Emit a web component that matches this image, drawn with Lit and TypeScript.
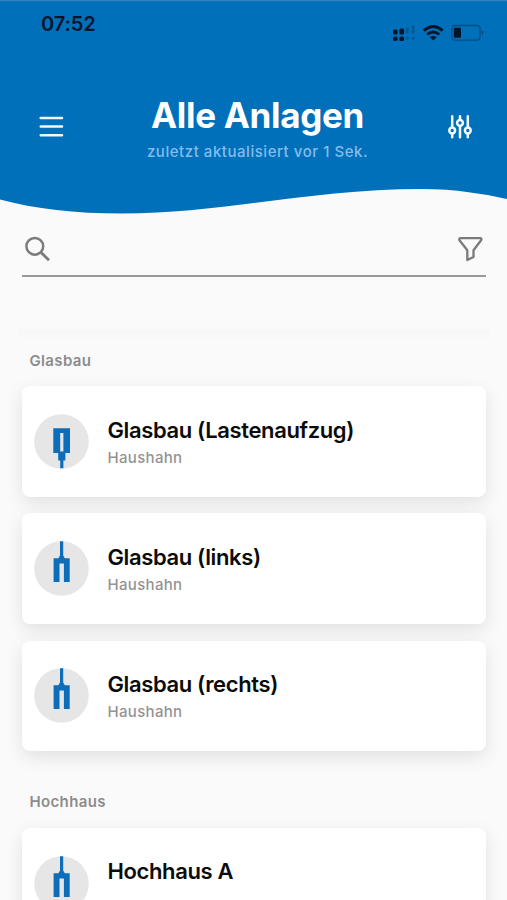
import { LitElement, html, svg, css } from "lit";
import { customElement, property } from "lit/decorators.js";

@customElement("status-bar")
class StatusBar extends LitElement {
  static styles = css`
    :host { display: flex; justify-content: space-between; height: 48px; padding: 0 22px 0 41px; color: #04152c; }
    .time { font-size: 20px; line-height: 24px; font-weight: 600; margin-top: 12px; letter-spacing: -0.1px; }
    .icons { width: 94px; height: 24px; margin-top: 20px; }
  `;
  render() {
    return html`
      <div class="time">07:52</div>
      <svg class="icons" viewBox="391 20 94 24">
        <g fill="#03152b">
          <rect x="393" y="29.5" width="4.6" height="5" rx="1.5" />
          <rect x="399.3" y="28.5" width="4.8" height="6" rx="1.5" />
          <rect x="393" y="36.5" width="4.6" height="4.6" rx="1.6" />
          <rect x="399.3" y="36.5" width="4.8" height="4.6" rx="1.6" />
        </g>
        <g fill="#03152b" opacity=".22">
          <rect x="405.8" y="27" width="3" height="6.5" rx="1" />
          <rect x="411.6" y="25" width="3" height="8.5" rx="1" />
          <rect x="406" y="36.8" width="3" height="3" rx="1.2" />
          <rect x="411.6" y="36.8" width="3" height="3" rx="1.2" />
        </g>
        <g fill="none" stroke="#03152b" stroke-width="2.9">
          <path d="M423.8 30.6 Q433.2 22.4 442.6 30.6" />
          <path d="M427.2 34.5 Q433.2 29.4 439.2 34.5" />
        </g>
        <path d="M429.8 37.2 Q433.2 34.6 436.6 37.2 L433.2 40.4 Z" fill="#03152b" />
        <rect x="451.7" y="25.5" width="28.3" height="14.6" rx="3.2" fill="none" stroke="#03152b" stroke-opacity=".38" stroke-width="1.3" />
        <rect x="453.8" y="27.8" width="7.2" height="10" rx="1.4" fill="#03152b" />
        <path d="M481.8 30.3 Q485 32.6 481.8 35 Z" fill="#03152b" fill-opacity=".45" />
      </svg>
    `;
  }
}

@customElement("page-header")
class PageHeader extends LitElement {
  static styles = css`
    :host { display: grid; grid-template-columns: 24px 1fr 26px; padding: 50px 34px 0 39px; color: #fff; }
    .icon { display: block; width: 26px; height: 26px; margin-top: 16px; overflow: visible; }
    .titles { text-align: center; white-space: nowrap; padding-left: 5px; }
    .title { font-size: 35px; line-height: 42px; font-weight: 700; margin: -4px 0 0; letter-spacing: -0.3px; }
    .sub { font-size: 15px; line-height: 20px; font-weight: 500; color: #83bdec; margin-top: 6px; letter-spacing: 0.54px; }
  `;
  render() {
    return html`
      <svg class="icon" viewBox="0 0 26 26" stroke="#eefaff" stroke-width="2.5" stroke-linecap="round">
        <path d="M1.7 3.9H23 M1.7 12.5H23 M1.7 21.3H23" />
      </svg>
      <div class="titles">
        <h1 class="title">Alle Anlagen</h1>
        <div class="sub">zuletzt aktualisiert vor 1 Sek.</div>
      </div>
      <svg class="icon" viewBox="0 0 26 26" fill="none" stroke="#f2fbff" stroke-width="2.5" stroke-linecap="round">
        <path d="M5.2 2.2V13 M5.2 20V23.3 M13 2.2V5.4 M13 12.4V23.3 M20.8 2.2V13 M20.8 20V23.3" />
        <circle cx="5.2" cy="16.5" r="2.9" />
        <circle cx="13" cy="8.9" r="2.9" />
        <circle cx="20.8" cy="16.5" r="2.9" />
      </svg>
    `;
  }
}

@customElement("search-field")
class SearchField extends LitElement {
  static styles = css`
    :host { display: flex; justify-content: space-between; height: 40px; margin: 0 21px 0 22px; border-bottom: 2px solid #999; }
    .icon { width: 28px; height: 28px; fill: none; stroke: #7b7b7b; }
  `;
  render() {
    return html`
      <svg class="icon" viewBox="22 235 28 28" stroke-width="2.5">
        <circle cx="34.8" cy="246.3" r="8.4" />
        <path d="M41 252.4L49 260.3" stroke-width="2.8" />
      </svg>
      <svg class="icon" viewBox="458 235 28 28" stroke-width="2.3" stroke-linejoin="round">
        <path d="M460.3 238.2H480.4Q482 238.6 481.1 240.3L473.5 250.3V257L467.3 260V250.3L459.5 240.3Q458.7 238.6 460.3 238.2Z" />
      </svg>
    `;
  }
}

@customElement("unit-card")
class UnitCard extends LitElement {
  @property() name = "";
  @property() maker = "";
  @property() kind = "up";
  static styles = css`
    :host { display: flex; align-items: center; box-sizing: border-box; height: 110.6px; padding: 0 12px; gap: 18.5px;
      background: #fff; border-radius: 8px; box-shadow: 0 6px 18px rgba(0, 0, 0, 0.1); }
    .icon { width: 55px; height: 55px; flex: none; }
    .text { white-space: nowrap; }
    .name { font-size: 22px; line-height: 28px; font-weight: 600; color: #0b0b0b; letter-spacing: -0.37px; }
    .maker { height: 20px; font-size: 15px; line-height: 20px; font-weight: 500; color: #939393; margin-top: 4px; letter-spacing: 0.32px; }
  `;
  render() {
    const glyph = this.kind === "down"
      ? svg`<path fill-rule="evenodd" d="M19.3 14.2H36V39H31.4V46.5H29.4V54.3H26.2V46.5H24.2V39H19.3Z M26.2 19H29.4V37.6H26.2Z" />`
      : svg`<path d="M26 .3H29.2V14.6L30.8 17.2H35.7V41.1H29.9V22.6H25.5V41.1H19.6V17.2H24.4L26 14.6Z" />`;
    return html`
      <svg class="icon" viewBox="0 0 55 55">
        <circle cx="27.5" cy="27.5" r="27.3" fill="#e6e6e6" />
        <g fill="#0d6db8">${glyph}</g>
      </svg>
      <div class="text">
        <div class="name">${this.name}</div>
        <div class="maker">${this.maker}</div>
      </div>
    `;
  }
}

const groups = [
  { title: "Glasbau", units: [
    { name: "Glasbau (Lastenaufzug)", maker: "Haushahn", kind: "down" },
    { name: "Glasbau (links)", maker: "Haushahn", kind: "up" },
    { name: "Glasbau (rechts)", maker: "Haushahn", kind: "up" },
  ] },
  { title: "Hochhaus", units: [{ name: "Hochhaus A", maker: "", kind: "up" }] },
];

@customElement("app-root")
class AppRoot extends LitElement {
  static styles = css`
    :host { display: block; height: 900px; overflow: hidden; background: #fafafa; font-family: Inter, "Liberation Sans", sans-serif; }
    .top { position: relative; height: 235px; }
    .wave { position: absolute; left: 0; top: 0; width: 507px; height: 220px; }
    .bar { position: relative; }
    .list { margin-top: 52px; padding: 0 21px 0 22px; }
    .edge { height: 12px; background: linear-gradient(#f7f7f7, #fafafa); margin: 0 -4px; }
    .group { margin-bottom: 41.2px; }
    .heading { margin: 0 0 0 7.5px; font-size: 15px; line-height: 20px; font-weight: 600; color: #8c8c8c; letter-spacing: 0.35px; }
    .first { padding-top: 10px; }
    .cards { display: grid; gap: 16.6px; margin-top: 15.3px; }
  `;
  render() {
    return html`
      <div class="top">
        <svg class="wave" viewBox="0 0 507 220">
          <path fill="#0170ba" d="M0 0H507V199C485 194 455 189 422 189C310 189 225 213.5 122 213.5C75 213.5 35 209 0 199.5Z" />
          <rect width="507" height="1.4" fill="#2a82c2" />
        </svg>
        <status-bar class="bar"></status-bar>
        <page-header class="bar"></page-header>
      </div>
      <search-field></search-field>
      <div class="list">
        <div class="edge"></div>
        <div class="first">
          ${groups.map((g) => html`
            <section class="group">
              <h2 class="heading">${g.title}</h2>
              <div class="cards">
                ${g.units.map((u) => html`<unit-card .name=${u.name} .kind=${u.kind} .maker=${u.maker}></unit-card>`)}
              </div>
            </section>`)}
        </div>
      </div>
    `;
  }
}
